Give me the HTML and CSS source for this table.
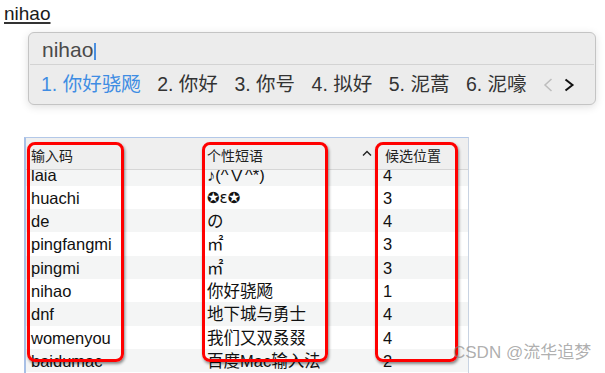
FILE: index.html
```html
<!DOCTYPE html>
<html lang="zh">
<head>
<meta charset="utf-8">
<link rel="stylesheet" href="styles.css">
</head>
<body>
<div class="label">nihao</div>
<div class="ime">
  <div class="ime-input">nihao<span class="cursor"></span></div>
  <div class="ime-cands">
    <span class="cand active">1. 你好骁飏</span>
    <span class="cand">2. 你好</span>
    <span class="cand">3. 你号</span>
    <span class="cand">4. 拟好</span>
    <span class="cand">5. 泥蒿</span>
    <span class="cand">6. 泥嚎</span>
    <span class="arrows">
      <svg class="arrow" width="12" height="16" viewBox="0 0 12 16"><path d="M9.5 2 L3 8 L9.5 14" fill="none" stroke="#bdbdbd" stroke-width="1.5"/></svg>
      <svg class="arrow" width="12" height="16" viewBox="0 0 12 16"><path d="M2.5 2.5 L9.5 8 L2.5 13.5" fill="none" stroke="#111" stroke-width="2"/></svg>
    </span>
  </div>
</div>
<div class="table">
  <div class="thead">
    <div class="th c1">输入码</div>
    <div class="th c2">个性短语<svg class="sort" width="10" height="6" viewBox="0 0 10 6"><path d="M1 5.5 L5 1.5 L9 5.5" fill="none" stroke="#222" stroke-width="1.4"/></svg></div>
    <div class="th c3">候选位置</div>
  </div>
  <div class="tbody">
    <div class="rows">
      <div class="row alt"><div class="td c1">laia</div><div class="td c2">♪(^∇^*)</div><div class="td c3">4</div></div>
      <div class="row"><div class="td c1">huachi</div><div class="td c2 sym">✪ε✪</div><div class="td c3">3</div></div>
      <div class="row alt"><div class="td c1">de</div><div class="td c2">の</div><div class="td c3">4</div></div>
      <div class="row"><div class="td c1">pingfangmi</div><div class="td c2">㎡</div><div class="td c3">3</div></div>
      <div class="row alt"><div class="td c1">pingmi</div><div class="td c2">㎡</div><div class="td c3">3</div></div>
      <div class="row"><div class="td c1">nihao</div><div class="td c2">你好骁飏</div><div class="td c3">1</div></div>
      <div class="row alt"><div class="td c1">dnf</div><div class="td c2">地下城与勇士</div><div class="td c3">4</div></div>
      <div class="row"><div class="td c1">womenyou</div><div class="td c2">我们又双叒叕</div><div class="td c3">4</div></div>
      <div class="row alt"><div class="td c1">baidumac</div><div class="td c2">百度Mac输入法</div><div class="td c3">2</div></div>
    </div>
  </div>
  <div class="mark m1"></div>
  <div class="mark m2"></div>
  <div class="mark m3"></div>
</div>
<div class="watermark">CSDN @流华追梦</div>
</body>
</html>
```
FILE: styles.css
```css
html, body {
  margin: 0;
  padding: 0;
  background: #fff;
}
body {
  width: 605px;
  height: 373px;
  overflow: hidden;
  position: relative;
  font-family: "Liberation Sans", "Noto Sans CJK SC", sans-serif;
  color: #111;
}
.label {
  padding: 3px 0 0 4px;
  font-size: 19px;
  line-height: 22px;
  color: #1a1a1a;
  text-decoration: underline;
  text-decoration-thickness: 2px;
  text-underline-offset: 2px;
  text-decoration-color: #333;
  width: max-content;
}
.ime {
  margin: 7px 0 0 28px;
  width: 568px;
  height: 73px;
  box-sizing: border-box;
  border: 1px solid #c4c4c4;
  border-radius: 6px;
  background: #ececec;
  box-shadow: 0 2px 8px rgba(0,0,0,0.13);
}
.ime-input {
  height: 28px;
  padding: 3px 0 0 12px;
  font-size: 21px;
  line-height: 28px;
  color: #4a4a4a;
  border-bottom: 1px solid #d3d3d3;
  margin: 0 1px;
  display: flex;
  align-items: center;
}
.cursor {
  display: inline-block;
  width: 2px;
  height: 17px;
  background: #4a8fe0;
  margin-left: 1px;
  margin-top: 2px;
}
.ime-cands {
  height: 39px;
  padding-left: 12px;
  display: flex;
  align-items: center;
  gap: 16.5px;
  font-size: 19.5px;
  line-height: 39px;
  color: #333;
}
.cand.active {
  color: #3f8de3;
}
.arrows {
  display: flex;
  align-items: center;
  gap: 9px;
  margin-left: -1px;
}
.arrow {
  display: block;
}
.table {
  margin: 32px 0 0 24px;
  width: 445px;
  height: 236px;
  box-sizing: border-box;
  border-top: 1px solid #b3c8e8;
  border-left: 2px solid #a8c0e6;
  border-right: 1px solid #c8d3e2;
  position: relative;
  overflow: hidden;
}
.thead {
  display: grid;
  grid-template-columns: 176px 174px 1fr;
  height: 31px;
  background: #efefef;
  border-bottom: 1px solid #d6d6d6;
  font-size: 14px;
  color: #222;
}
.th {
  display: flex;
  align-items: center;
  padding-top: 2px;
}
.th.c1 { padding-left: 5px; }
.th.c2 { padding-left: 5px; padding-right: 4px; justify-content: space-between; }
.th.c3 { padding-left: 9px; }
.sort { margin-top: -3px; }
.tbody {
  height: 203px;
  overflow: hidden;
}
.rows {
  margin-top: -7.5px;
}
.row {
  display: grid;
  grid-template-columns: 176px 174px 1fr;
  height: 23.3px;
  font-size: 16.5px;
  line-height: 23.3px;
  color: #111;
  background: #fff;
}
.row.alt {
  background: #f4f5f5;
}
.td { white-space: nowrap; padding-top: 1px; }
.td.c1 { padding-left: 5px; }
.td.c2 { padding-left: 5px; }
.td.c3 { padding-left: 7px; }
.sym { font-family: "DejaVu Sans", "Noto Sans CJK SC", sans-serif; font-size: 15px; }
.mark {
  position: absolute;
  top: 4px;
  height: 220px;
  box-sizing: border-box;
  border: 3px solid #ff0000;
  border-radius: 8px;
  box-shadow: 1px 2px 3px rgba(0,0,0,0.45);
}
.m1 { left: 1px; width: 97px; }
.m2 { left: 176px; width: 126px; }
.m3 { left: 349px; width: 83px; }
.watermark {
  position: absolute;
  left: 453px;
  top: 343px;
  font-size: 17px;
  line-height: 20px;
  color: rgba(130,130,130,0.65);
  white-space: nowrap;
}
```
